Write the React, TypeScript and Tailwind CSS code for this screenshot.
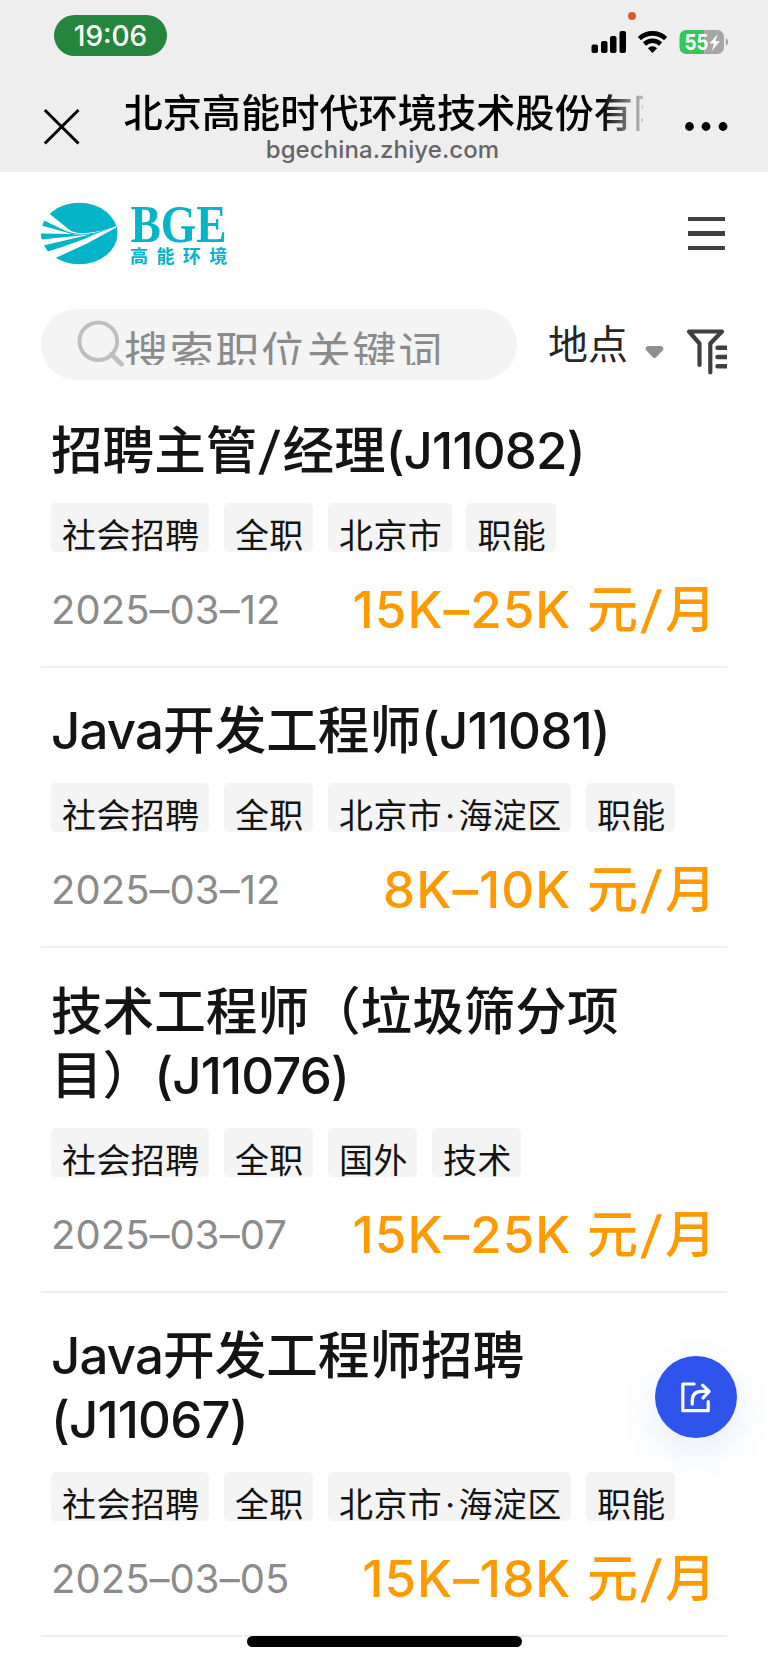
type Job = {
  title: string[]
  tags: string[]
  date: string
  salary: string
}

const jobs: Job[] = [
  {
    title: ['招聘主管/经理(J11082)'],
    tags: ['社会招聘', '全职', '北京市', '职能'],
    date: '2025–03–12',
    salary: '15K–25K',
  },
  {
    title: ['Java开发工程师(J11081)'],
    tags: ['社会招聘', '全职', '北京市·海淀区', '职能'],
    date: '2025–03–12',
    salary: '8K–10K',
  },
  {
    title: ['技术工程师（垃圾筛分项', '目）(J11076)'],
    tags: ['社会招聘', '全职', '国外', '技术'],
    date: '2025–03–07',
    salary: '15K–25K',
  },
  {
    title: ['Java开发工程师招聘', '(J11067)'],
    tags: ['社会招聘', '全职', '北京市·海淀区', '职能'],
    date: '2025–03–05',
    salary: '15K–18K',
  },
]

function StatusBar() {
  return (
    <div className="flex h-[86px] items-start justify-between pl-[54px] pr-10">
      <div className="mt-[15px] flex h-[41px] w-[113px] items-center justify-center rounded-full bg-[#24863d] text-[28px] font-medium text-white">
        19:06
      </div>
      <svg className="mt-[8px] h-[50px] w-[140px]" viewBox="588 8 140 50">
        <circle cx="632" cy="16" r="4" fill="#d85a2c" />
        <g fill="#000">
          <rect x="591.5" y="44.5" width="6.5" height="8.5" rx="2" />
          <rect x="601" y="41" width="6.5" height="12" rx="2" />
          <rect x="610" y="36" width="6.5" height="17" rx="2" />
          <rect x="619.5" y="31" width="6.5" height="22" rx="2" />
        </g>
        <g fill="none" stroke="#000" strokeWidth="4.6">
          <path d="M639.4 38.6a19 19 0 0 1 26.2 0" />
          <path d="M644.4 44a11.8 11.8 0 0 1 16.2 0" />
        </g>
        <path d="M652.5 53l-4.6-4.8a6.6 6.6 0 0 1 9.2 0z" fill="#000" />
        <path d="M686 30h18.500v24H686a6.500 6.500 0 0 1-6.500-6.500v-11A6.500 6.500 0 0 1 686 30z" fill="#35c759" />
        <path d="M704.500 30h13a6.500 6.500 0 0 1 6.500 6.500v11a6.500 6.500 0 0 1-6.500 6.500h-13z" fill="#a6a6a6" />
        <path d="M725.800 38.200q2.400 1.300 2.400 3.800t-2.400 3.800z" fill="#a6a6a6" />
        <text x="684.500" y="50" fontSize="22" fontWeight="700" fill="#fff" textLength="24" lengthAdjust="spacingAndGlyphs">
          55
        </text>
        <path d="M717.500 34l-8 9.500h4.600l-2.400 7.500 8.400-9.700h-4.700z" fill="#fff" />
      </svg>
    </div>
  )
}

function TitleBar() {
  return (
    <div className="flex h-[86px] justify-between pl-[43px] pr-10">
      <svg className="mt-[22px] h-[38px] w-[38px]" viewBox="0 0 38 38" fill="none" stroke="#000" strokeWidth="3">
        <path d="M1.800 2L35.500 35.500M35.500 2L1.800 35.500" />
      </svg>
      <div className="flex w-[520px] flex-col items-center">
        <div className="h-[50px] w-full overflow-hidden whitespace-nowrap bg-gradient-to-r from-black from-92% to-transparent to-102% bg-clip-text pl-px text-[39.200px] font-medium leading-[54px] text-transparent">
          北京高能时代环境技术股份有限公司
        </div>
        <div className="text-[24px] font-medium leading-[27px] tracking-[0.100px] text-[#666]">bgechina.zhiye.com</div>
      </div>
      <svg className="mt-[34px] h-[12px] w-[44px]" viewBox="0 0 44 12">
        <circle cx="5.500" cy="6.500" r="4.400" />
        <circle cx="22" cy="6.500" r="4.400" />
        <circle cx="39" cy="6.500" r="4.400" />
      </svg>
    </div>
  )
}

function Logo() {
  return (
    <svg className="h-[64px] w-[188px]" viewBox="41 202 188 64">
      <ellipse cx="79.200" cy="233.500" rx="38.300" ry="30.800" fill="#04b4c9" />
      <g fill="#fff">
        <path d="M36 202L50 214.300L69 229.500Q74 233.500 85 233.200Q100 232 115.500 226.500Q100 232.500 86 234Q76 235 66 231L44.500 220.800L40 221z" />
        <path d="M38 225L43 226L74 234.500L90 234.300L41.500 233.400L38 233z" />
        <path d="M38 239.600L41.800 239.600L90 234.500L44.500 245.200L38 246z" />
        <path d="M38 254L48.500 251.300Q80 241.500 94 234.500L116 226.200V227.800Q100 236.500 87 243.500L56 257.800L48 266z" />
      </g>
      <text x="130.500" y="241.600" fontSize="52" fontWeight="700" fill="#04b4c9" fontFamily="Liberation Serif, serif" textLength="96" lengthAdjust="spacingAndGlyphs">
        BGE
      </text>
      <text x="130" y="262.600" fontSize="18" fontWeight="700" fill="#04b4c9" letterSpacing="8.400" fontFamily="Noto Sans CJK SC, sans-serif">
        高能环境
      </text>
    </svg>
  )
}

function SearchRow() {
  return (
    <div className="mt-[43px] flex h-[71px] items-start">
      <div className="flex h-[71px] w-[476px] shrink-0 items-start rounded-full bg-[#f4f4f4] pl-[36px]">
        <svg className="mt-[10px] h-[48px] w-[47px]" viewBox="0 0 47 48" fill="none" stroke="#bfbfbf" strokeWidth="4">
          <circle cx="21.300" cy="22.200" r="18.800" />
          <path d="M34.500 35.500L44.500 45" strokeWidth="5" strokeLinecap="round" />
        </svg>
        <div className="mt-[14px] h-[41.700px] overflow-hidden whitespace-nowrap text-[44px] leading-[60px] tracking-[1.700px] text-[#8b8b8b]">
          搜索职位关键词
        </div>
      </div>
      <div className="ml-[31px] mt-[8px] w-[81px] shrink-0 whitespace-nowrap text-[40px] leading-[55px] text-[#262626]">地点</div>
      <svg className="ml-[16px] mt-[37px] h-[13px] w-[19px] shrink-0" viewBox="0 0 19 13">
        <path d="M3 0h13q4 1.500 1.500 4.500L11 11.500q-1.500 1.200-3 0L1.500 4.500Q-1 1.500 3 0z" fill="#8f8f8f" />
      </svg>
      <svg className="ml-[22px] mt-[18px] h-[49px] w-[41px] shrink-0" viewBox="0 0 41 49" fill="none" stroke="#404040" strokeWidth="4.200" strokeLinecap="round" strokeLinejoin="round">
        <path d="M13.500 38V16.500L3 4.500H36L24.300 16.500V45.500" />
        <path d="M31.500 20.700H44M31.500 30H44M31.500 39.300H44" strokeWidth="4.400" />
      </svg>
    </div>
  )
}

// latin runs are set a little tighter than the chinese around them
function TitleLine({ text }: { text: string }) {
  return (
    <div className="h-[64px] whitespace-nowrap">
      {text.split(/([A-Za-z0-9()]+|\/)/).map((part, i) => {
        if (part === '/') return <span key={i} className="inline-block -skew-x-6 px-[3px]">/</span>
        if (/^[A-Za-z0-9()]/.test(part)) return <span key={i} className="text-[51px] tracking-[-0.850px]">{part}</span>
        return part
      })}
    </div>
  )
}

function Tag({ text }: { text: string }) {
  return (
    <span className="h-[49px] overflow-hidden whitespace-nowrap rounded-[5px] bg-[#f4f4f4] pl-[11px] pr-[9.600px] text-[34px] leading-[66px] tracking-[0.400px] text-[#141414]">
      {text.split(/(·)/).map((part, i) => (
        part === '·' ? <span key={i} className="px-[3px]">·</span> : part
      ))}
    </span>
  )
}

function JobCard({ job }: { job: Job }) {
  return (
    <div className="border-b-2 border-[#eeeeee] pb-[26px] pl-[10px] pr-[11px] pt-[30.200px]">
      <h2 className="text-[51.600px] font-medium leading-[64px] text-[#141414]">
        {job.title.map(line => <TitleLine key={line} text={line} />)}
      </h2>
      <div className="mt-[21px] flex gap-[14.700px]">
        {job.tags.map(tag => <Tag key={tag} text={tag} />)}
      </div>
      <div className="mt-[28px] flex h-[60px] items-center justify-between">
        <span className="text-[40px] tracking-[0.050px] text-[#8b8b8b]">{job.date}</span>
        <span className="whitespace-nowrap text-[51px] font-medium leading-[60px] text-[#ff9900]">
          <span className="tracking-[1.100px]">{job.salary}</span>
          <span className="ml-[2px]"> 元</span>
          <span className="inline-block -skew-x-6 px-[4px]">/</span>
          <span>月</span>
        </span>
      </div>
    </div>
  )
}

function ShareButton() {
  return (
    <button className="absolute left-[655px] top-[1355.500px] flex h-[82px] w-[82px] items-center justify-center rounded-full bg-[#2f54eb] shadow-[0_14px_40px_rgba(47,84,235,0.12)]">
      <svg className="h-[32px] w-[32px]" viewBox="0 0 34 34" fill="none" stroke="#fff" strokeWidth="3.400" strokeLinecap="round" strokeLinejoin="round">
        <path d="M15 3.200H3V31.500H30V22" />
        <path d="M13 24.500V21Q13 11 23 11H30M24 4.500L31 11L24.500 18" />
      </svg>
    </button>
  )
}

export default function App() {
  return (
    <div className="relative h-[1663px] w-[768px] overflow-hidden bg-white font-['Inter','Noto_Sans_CJK_SC',sans-serif]">
      <header className="h-[172px] bg-[#eeeeee]">
        <StatusBar />
        <TitleBar />
      </header>
      <main className="px-[41px] pt-[30px]">
        <div className="flex h-[64px] items-start justify-between">
          <Logo />
          <div className="mr-[2px] mt-[15px] flex w-[37px] flex-col gap-[10px]">
            <div className="h-[4.300px] bg-[#404040]" />
            <div className="h-[4.300px] bg-[#404040]" />
            <div className="h-[4.300px] bg-[#404040]" />
          </div>
        </div>
        <SearchRow />
        <div className="mt-[8px]">
          {jobs.map(job => (
            <JobCard key={job.title.join('')} job={job} />
          ))}
        </div>
      </main>
      <ShareButton />
      <div className="absolute left-[247px] top-[1636px] h-[11px] w-[275px] rounded-full bg-black" />
    </div>
  )
}
